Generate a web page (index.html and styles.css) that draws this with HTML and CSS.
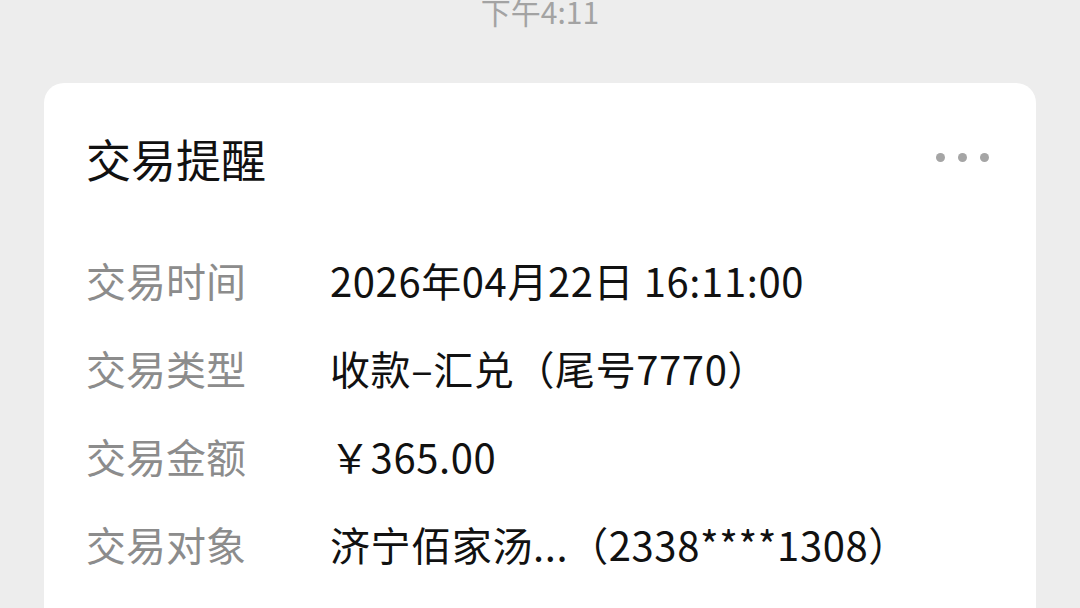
FILE: index.html
```html
<!DOCTYPE html>
<html lang="zh-CN">
<head>
<meta charset="utf-8">
<link rel="stylesheet" href="styles.css">
</head>
<body>
<div class="time">下午4:11</div>
<div class="card">
  <div class="card-head">
    <div class="title">交易提醒</div>
    <div class="more"><span></span><span></span><span></span></div>
  </div>
  <div class="rows">
    <div class="row"><div class="label">交易时间</div><div class="value">2026年04月22日 16:11:00</div></div>
    <div class="row"><div class="label">交易类型</div><div class="value">收款–汇兑（尾号7770）</div></div>
    <div class="row"><div class="label">交易金额</div><div class="value">￥365.00</div></div>
    <div class="row"><div class="label">交易对象</div><div class="value">济宁佰家汤...（2338****1308）</div></div>
  </div>
</div>
</body>
</html>
```
FILE: styles.css
```css
html, body {
  margin: 0;
  padding: 0;
  background: #ededed;
  font-family: "Noto Sans CJK SC", "Noto Sans", sans-serif;
  overflow: hidden;
  height: 608px;
}
.time {
  text-align: center;
  color: #a3a3a3;
  font-size: 30px;
  line-height: 30px;
  margin-top: -4px;
  height: 87px;
}
.card {
  background: #fff;
  margin: 0 44px;
  border-radius: 20px;
  padding: 43px 44px 0;
  height: 600px;
}
.card-head {
  display: flex;
  justify-content: space-between;
  align-items: center;
  height: 66px;
}
.title {
  font-size: 45px;
  line-height: 66px;
  color: #111;
  margin-left: -2px;
}
.more {
  display: flex;
  gap: 13px;
  margin-right: 3px;
  margin-top: -4px;
}
.more span {
  width: 9px;
  height: 9px;
  border-radius: 50%;
  background: #a5a5a5;
}
.rows {
  margin-top: 44px;
  display: flex;
  flex-direction: column;
}
.row {
  display: flex;
  height: 88px;
  align-items: center;
}
.label {
  width: 244px;
  font-size: 40px;
  color: #8c8c8c;
  margin-left: -2px;
  flex: none;
}
.value {
  font-size: 40px;
  color: #111;
  letter-spacing: 0.6px;
}
```
